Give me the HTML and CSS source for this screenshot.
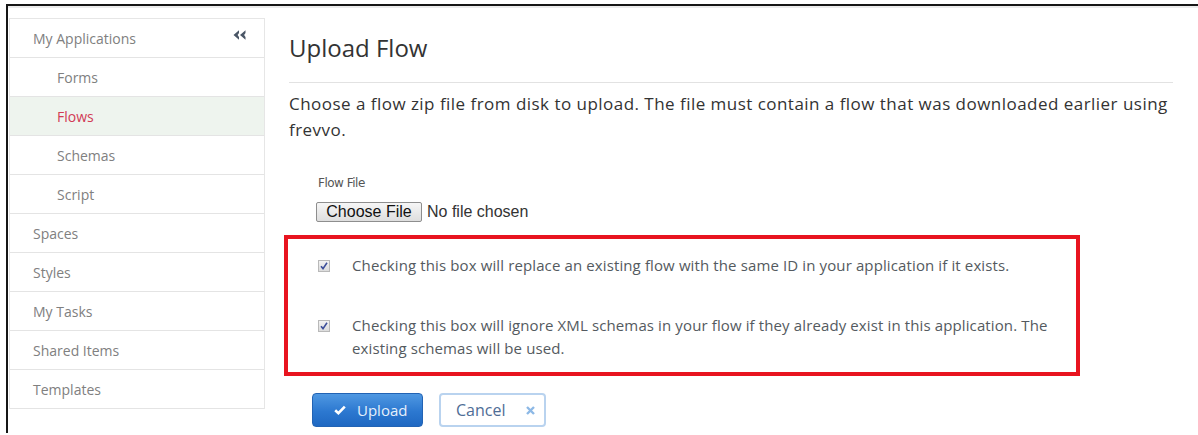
FILE: index.html
```html
<!DOCTYPE html>
<html lang="en">
<head>
<meta charset="utf-8">
<title>Upload Flow</title>
<link rel="stylesheet" href="styles.css">
</head>
<body>
<div class="frame">
  <nav class="sidebar">
    <div class="nav-row nav-head">
      <span>My Applications</span>
      <svg class="collapse" width="13" height="10" viewBox="0 0 13 10" aria-hidden="true">
        <path d="M6 0.3 L0.5 5 L6 9.7 L6 6.9 L4.6 5 L6 3.1 Z" fill="#4a5666"/>
        <path d="M12.5 0.3 L7 5 L12.5 9.7 L12.5 6.9 L11.1 5 L12.5 3.1 Z" fill="#4a5666"/>
      </svg>
    </div>
    <div class="nav-row nav-sub">Forms</div>
    <div class="nav-row nav-sub active">Flows</div>
    <div class="nav-row nav-sub">Schemas</div>
    <div class="nav-row nav-sub">Script</div>
    <div class="nav-row">Spaces</div>
    <div class="nav-row">Styles</div>
    <div class="nav-row">My Tasks</div>
    <div class="nav-row">Shared Items</div>
    <div class="nav-row">Templates</div>
  </nav>

  <main class="content">
    <h1 class="title">Upload Flow</h1>
    <hr class="rule">
    <p class="intro">Choose a flow zip file from disk to upload. The file must contain a flow that was downloaded earlier using frevvo.</p>

    <div class="field">
      <div class="field-label">Flow File</div>
      <div class="file-picker">
        <button type="button" class="file-btn">Choose File</button>
        <span class="file-name">No file chosen</span>
      </div>
    </div>

    <div class="options">
      <label class="option">
        <span class="check"><svg width="8" height="8" viewBox="0 0 8 8"><path d="M1 4.2 L3 6.6 L7 0.8" fill="none" stroke="#3d4f9a" stroke-width="1.6"/></svg></span>
        <span class="option-text">Checking this box will replace an existing flow with the same ID in your application if it exists.</span>
      </label>
      <label class="option">
        <span class="check"><svg width="8" height="8" viewBox="0 0 8 8"><path d="M1 4.2 L3 6.6 L7 0.8" fill="none" stroke="#3d4f9a" stroke-width="1.6"/></svg></span>
        <span class="option-text">Checking this box will ignore XML schemas in your flow if they already exist in this application. The existing schemas will be used.</span>
      </label>
    </div>

    <div class="actions">
      <button type="button" class="btn btn-primary">
        <svg width="12" height="10" viewBox="0 0 12 10" aria-hidden="true"><path d="M1.2 5.2 L4.4 8.2 L10.8 1.6" fill="none" stroke="#fff" stroke-width="2.6"/></svg>
        <span>Upload</span>
      </button>
      <button type="button" class="btn btn-cancel">
        <span>Cancel</span>
        <svg width="9" height="9" viewBox="0 0 9 9" aria-hidden="true"><path d="M1 1 L8 8 M8 1 L1 8" stroke="#8db9e6" stroke-width="2.4"/></svg>
      </button>
    </div>
  </main>
</div>
</body>
</html>
```

FILE: styles.css
```css
html, body {
  margin: 0;
  padding: 0;
  background: #fff;
}

body {
  font-family: "Open Sans", "DejaVu Sans", sans-serif;
  color: #333;
  height: 435px;
  overflow: hidden;
}

/* outer window edge */
.frame {
  margin: 4px 0 0 6px;
  border-top: 2px solid #161616;
  border-left: 2px solid #161616;
  height: 429px;
  box-sizing: border-box;
  display: flex;
  align-items: flex-start;
  padding: 12px 0 0 1px;
  box-shadow: inset 0 2px 0 #ececec;
}

/* navigation */
.sidebar {
  width: 256px;
  box-sizing: border-box;
  border: 1px solid #e6e6e6;
  border-bottom: none;
  flex: none;
}

.nav-row {
  height: 39px;
  box-sizing: border-box;
  border-bottom: 1px solid #e4e4e4;
  display: flex;
  align-items: center;
  padding-left: 23px;
  font-size: 14px;
  color: #808080;
}

.nav-head {
  justify-content: space-between;
  padding-right: 18px;
}

.collapse {
  margin-top: -7px;
}

.nav-sub {
  padding-left: 47px;
}

.nav-row.active {
  background: #eef4ee;
  color: #d23a55;
}

/* main panel */
.content {
  margin-left: 24px;
  width: 884px;
  flex: none;
}

.title {
  margin: 15px 0 0;
  font-size: 24px;
  font-weight: 400;
  line-height: 30px;
  color: #333;
}

.rule {
  margin: 19px 0 0;
  border: none;
  border-top: 1px solid #e2e2e2;
  height: 0;
}

.intro {
  margin: 8px 0 0;
  font-size: 17px;
  letter-spacing: 0.47px;
  line-height: 26px;
  color: #333;
}

.field {
  margin-top: 32px;
  padding-left: 27px;
}

.field-label {
  font-family: "DejaVu Sans", sans-serif;
  font-size: 12px;
  line-height: 16px;
  color: #555;
  padding-left: 2px;
  letter-spacing: -0.5px;
}

.file-picker {
  margin-top: 11px;
  display: flex;
  align-items: center;
  gap: 5px;
}

.file-btn {
  height: 20px;
  width: 106px;
  padding: 0;
  font-family: "Liberation Sans", Arial, sans-serif;
  font-size: 16px;
  line-height: 18px;
  color: #111;
  background: linear-gradient(#f6f6f6, #dedede);
  border: 1px solid #8e8e8e;
  border-radius: 2px;
}

.file-name {
  font-family: "Liberation Sans", Arial, sans-serif;
  font-size: 16px;
  color: #333;
}

/* highlighted options */
.options {
  margin: 13px 0 0 -5px;
  width: 796px;
  box-sizing: border-box;
  border: 4px solid #e8141f;
  padding: 15px 10px 12px 30px;
  display: flex;
  flex-direction: column;
  gap: 37px;
}

.option {
  display: flex;
  align-items: flex-start;
  gap: 22px;
}

.check {
  flex: none;
  width: 12px;
  height: 12px;
  box-sizing: border-box;
  margin-top: 6px;
  border: 1px solid #b9b9b9;
  background: linear-gradient(#f2f2f2, #dcdcdc);
  display: flex;
  align-items: center;
  justify-content: center;
}

.option-text {
  font-size: 15px;
  letter-spacing: 0.12px;
  line-height: 23px;
  color: #545a60;
  max-width: 715px;
}

/* buttons */
.actions {
  margin: 17px 0 0 23px;
  display: flex;
  gap: 16px;
}

.btn {
  height: 34px;
  box-sizing: border-box;
  border-radius: 4px;
  display: flex;
  align-items: center;
  font-family: "Open Sans", "DejaVu Sans", sans-serif;
  font-size: 15px;
}

.btn-primary {
  width: 111px;
  padding: 0 0 0 21px;
  gap: 11px;
  color: #e6f0fb;
  background: linear-gradient(#4f98e2, #2c78d0 55%, #1f68c2);
  border: 1px solid #2263b4;
}

.btn-cancel {
  width: 107px;
  padding: 0 0 0 15px;
  gap: 21px;
  color: #4f6d96;
  background: #fff;
  border: 2px solid #b9d3ef;
  font-size: 16px;
}
```
